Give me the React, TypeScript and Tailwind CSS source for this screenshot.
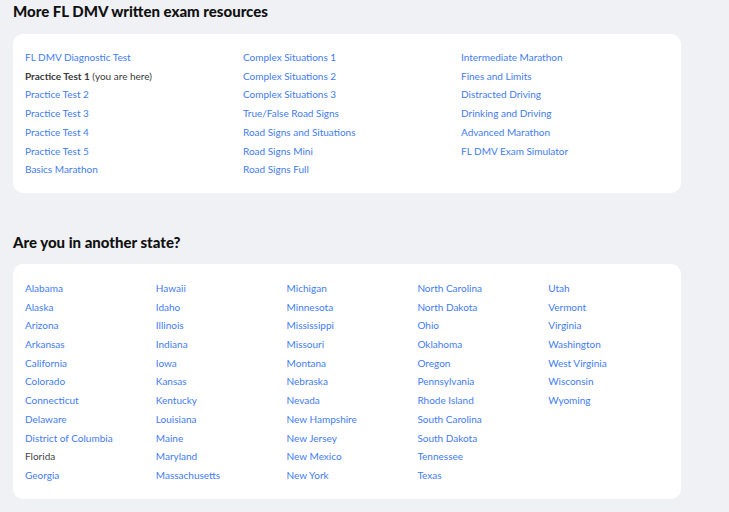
import React from 'react'

const resources: { label: string; current?: boolean }[][] = [
    [
        { label: 'FL DMV Diagnostic Test' },
        { label: 'Practice Test 1', current: true },
        { label: 'Practice Test 2' },
        { label: 'Practice Test 3' },
        { label: 'Practice Test 4' },
        { label: 'Practice Test 5' },
        { label: 'Basics Marathon' },
    ],
    [
        { label: 'Complex Situations 1' },
        { label: 'Complex Situations 2' },
        { label: 'Complex Situations 3' },
        { label: 'True/False Road Signs' },
        { label: 'Road Signs and Situations' },
        { label: 'Road Signs Mini' },
        { label: 'Road Signs Full' },
    ],
    [
        { label: 'Intermediate Marathon' },
        { label: 'Fines and Limits' },
        { label: 'Distracted Driving' },
        { label: 'Drinking and Driving' },
        { label: 'Advanced Marathon' },
        { label: 'FL DMV Exam Simulator' },
    ],
]

const states: string[][] = [
    ['Alabama', 'Alaska', 'Arizona', 'Arkansas', 'California', 'Colorado', 'Connecticut', 'Delaware', 'District of Columbia', 'Florida', 'Georgia'],
    ['Hawaii', 'Idaho', 'Illinois', 'Indiana', 'Iowa', 'Kansas', 'Kentucky', 'Louisiana', 'Maine', 'Maryland', 'Massachusetts'],
    ['Michigan', 'Minnesota', 'Mississippi', 'Missouri', 'Montana', 'Nebraska', 'Nevada', 'New Hampshire', 'New Jersey', 'New Mexico', 'New York'],
    ['North Carolina', 'North Dakota', 'Ohio', 'Oklahoma', 'Oregon', 'Pennsylvania', 'Rhode Island', 'South Carolina', 'South Dakota', 'Tennessee', 'Texas'],
    ['Utah', 'Vermont', 'Virginia', 'Washington', 'West Virginia', 'Wisconsin', 'Wyoming'],
]

export default function App() {
    return (
        <div className="min-h-[512px] bg-[#f0f1f5] px-[13px] text-[10px] font-['Lato','Liberation_Sans',sans-serif]">
            <h2 className="text-[15px] leading-[22px] font-black text-[#111]">More FL DMV written exam resources</h2>
            <div className="mt-[12px] w-[668px] rounded-[10px] bg-white px-[12px] pt-[14px] pb-[14px]">
                <div className="grid grid-cols-[repeat(3,218px)]">
                    {resources.map((col, i) => (
                        <ul key={i}>
                            {col.map(item => (
                                <li key={item.label} className="leading-[18.7px]">
                                    {item.current ? (
                                        <span className="text-[#3a3a3a]">
                                            <span className="font-bold">{item.label}</span> (you are here)
                                        </span>
                                    ) : (
                                        <a className="text-[#3f7cf6]">{item.label}</a>
                                    )}
                                </li>
                            ))}
                        </ul>
                    ))}
                </div>
            </div>

            <h2 className="mt-[38px] text-[15px] leading-[22px] font-black text-[#111]">Are you in another state?</h2>
            <div className="mt-[11px] w-[668px] rounded-[10px] bg-white px-[12px] pt-[15px] pb-[14px]">
                <div className="grid grid-cols-[repeat(5,130.8px)]">
                    {states.map((col, i) => (
                        <ul key={i}>
                            {col.map(s => (
                                <li key={s} className="leading-[18.7px]">
                                    {s === 'Florida' ? (
                                        <span className="text-[#444]">{s}</span>
                                    ) : (
                                        <a className="text-[#3f7cf6]">{s}</a>
                                    )}
                                </li>
                            ))}
                        </ul>
                    ))}
                </div>
            </div>
        </div>
    )
}
